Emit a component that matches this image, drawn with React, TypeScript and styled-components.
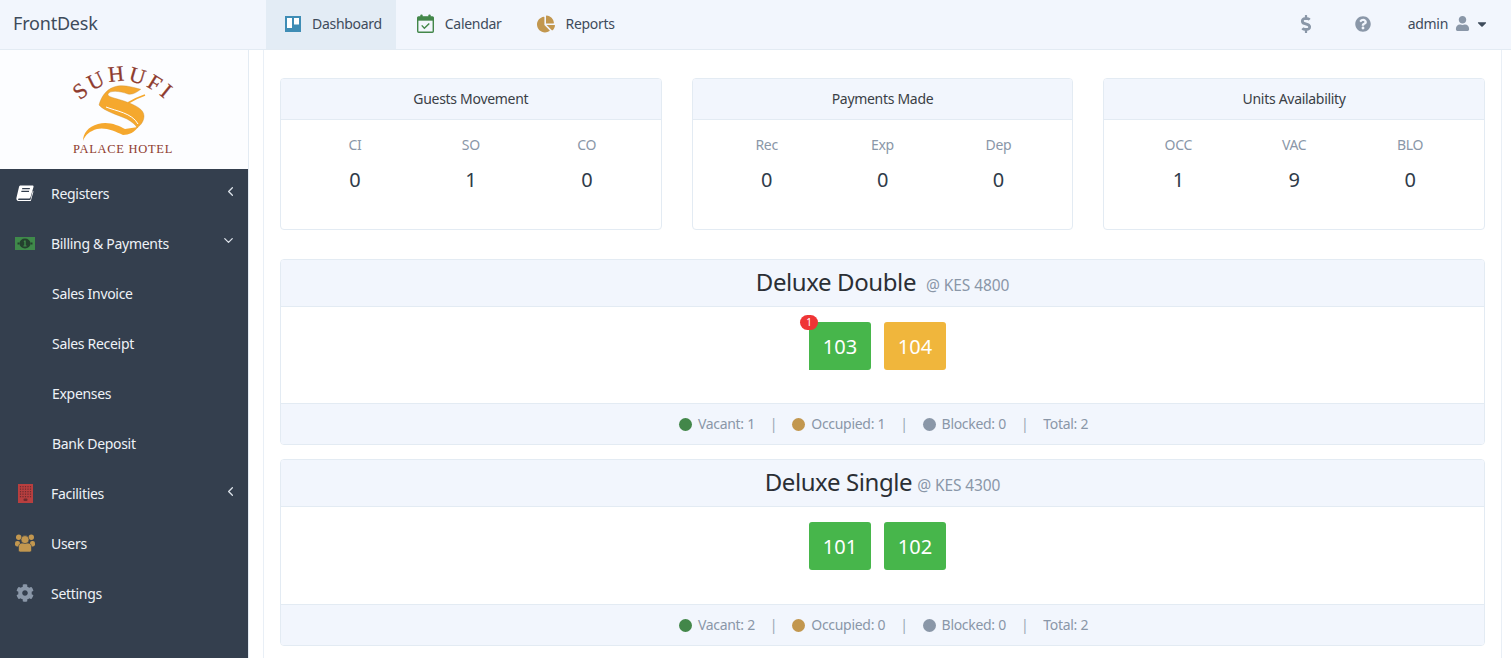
import React from "react";
import styled, { createGlobalStyle } from "styled-components";
import { ChevronDown, ChevronLeft } from "lucide-react";
import {
  FaCaretDown,
  FaChartPie,
  FaCog,
  FaDollarSign,
  FaQuestionCircle,
  FaUser,
} from "react-icons/fa";

const GlobalStyle = createGlobalStyle`
  html, body {
    margin: 0;
    height: 100%;
    overflow: hidden;
    background: #fff;
    font-family: "Noto Sans", "Open Sans", sans-serif;
    font-size: 14px;
    letter-spacing: -0.3px;
    color: #3e4b5b;
  }
  * { box-sizing: border-box; }
`;

const Page = styled.div`
  width: 1511px;
  height: 658px;
  display: flex;
  flex-direction: column;
  overflow: hidden;
`;

const Navbar = styled.header`
  flex: 0 0 50px;
  display: flex;
  align-items: stretch;
  background: #f2f6fd;
  border-bottom: 1px solid #e3ebf3;
`;

const Brand = styled.div`
  width: 266px;
  padding-left: 13px;
  font-size: 18px;
  letter-spacing: -0.2px;
  line-height: 47px;
  color: #3e4b5b;
`;

const NavItem = styled.a<{ $active?: boolean }>`
  display: flex;
  align-items: center;
  gap: 11px;
  padding: 0 14px 2px 21px;
  background: ${({ $active }) => ($active ? "#e3ecf5" : "transparent")};
  color: #3e4b5b;
  font-size: 14px;
`;

const NavRight = styled.div`
  margin-left: auto;
  display: flex;
  align-items: center;
  padding: 0 22px 2px 0;
  color: #8a97a8;
`;

const NavIconButton = styled.span<{ $gap: number }>`
  display: flex;
  margin-right: ${({ $gap }) => $gap}px;
  font-size: 18px;
`;

const UserName = styled.span`
  color: #3e4b5b;
  margin-right: 7px;
`;

const Caret = styled(FaCaretDown)`
  color: #3e4b5b;
  margin-left: 5px;
  font-size: 14px;
`;

const Body = styled.div`
  flex: 1;
  display: flex;
  min-height: 0;
`;

const Sidebar = styled.aside`
  flex: 0 0 249px;
  display: flex;
  flex-direction: column;
  border-right: 1px solid #e3ebf3;
`;

const LogoBox = styled.div`
  flex: 0 0 119px;
  display: flex;
  justify-content: center;
  padding-top: 12px;
  background: #fcfdff;
`;

const Menu = styled.nav`
  flex: 1;
  background: #343f4e;
`;

const MenuRow = styled.a<{ $sub?: boolean }>`
  height: 50px;
  display: flex;
  align-items: center;
  padding-left: ${({ $sub }) => ($sub ? "52px" : "0")};
  padding-right: 10px;
  padding-bottom: 2px;
  color: #eef2f7;
  font-size: 14px;
`;

const MenuIcon = styled.span<{ $color: string }>`
  width: 51px;
  padding-right: 1px;
  display: flex;
  justify-content: center;
  color: ${({ $color }) => $color};
  font-size: 20px;
`;

const MenuChevron = styled.span<{ $down?: boolean }>`
  margin-left: auto;
  margin-right: ${({ $down }) => ($down ? "2px" : "0")};
  margin-top: ${({ $down }) => ($down ? "-6px" : "-4px")};
  display: flex;
  color: #dfe5ec;
`;

const Main = styled.main`
  flex: 1;
  padding: 0 9px 0 14px;
  min-width: 0;
`;

const Content = styled.div`
  height: 100%;
  padding: 28px 16px 0;
  border-left: 1px solid #e9eff6;
  border-right: 1px solid #e9eff6;
  overflow: hidden;
`;

const StatsGrid = styled.section`
  display: grid;
  grid-template-columns: repeat(3, 1fr);
  gap: 30px;
  margin-bottom: 29px;
`;

const Card = styled.div`
  border: 1px solid #e3ebf3;
  border-radius: 4px;
  overflow: hidden;
  background: #fff;
`;

const StatCard = styled(Card)`
  height: 152px;
`;

const StatHeader = styled.div`
  height: 41px;
  line-height: 39px;
  text-align: center;
  background: #f2f6fd;
  border-bottom: 1px solid #e3ebf3;
  color: #3a3f46;
`;

const StatRow = styled.div`
  display: grid;
  grid-template-columns: repeat(3, 1fr);
  padding: 15px 16px 0;
  text-align: center;
`;

const StatLabel = styled.div`
  color: #8a97a8;
  line-height: 20px;
`;

const StatValue = styled.div`
  font-size: 20px;
  line-height: 30px;
  margin-top: 10px;
  color: #2f3b49;
`;

const RoomCard = styled(Card)`
  margin-bottom: 14px;
`;

const RoomHeader = styled.div<{ $gap: number }>`
  height: 47px;
  display: flex;
  justify-content: center;
  align-items: baseline;
  gap: ${({ $gap }) => $gap}px;
  padding-top: 3px;
  background: #f2f6fd;
  border-bottom: 1px solid #e3ebf3;
`;

const RoomTitle = styled.span`
  font-size: 24px;
  letter-spacing: -0.4px;
  line-height: 38px;
  color: #2b2f35;
`;

const RoomRate = styled.span`
  font-size: 15.5px;
  letter-spacing: -0.1px;
  color: #8a97a8;
`;

const RoomBody = styled.div<{ $height: number }>`
  height: ${({ $height }) => $height}px;
  display: flex;
  justify-content: center;
  gap: 13px;
  padding: 15px 10px 0 0;
`;

const Tile = styled.div<{ $color: string; $flagged?: boolean }>`
  position: relative;
  width: 62px;
  height: 48px;
  display: flex;
  align-items: center;
  justify-content: center;
  background: ${({ $color }) => $color};
  border-radius: ${({ $flagged }) => ($flagged ? "0 3px 3px 0" : "3px")};
  color: #fff;
  font-size: 20px;
  letter-spacing: 0;
`;

const Badge = styled.span`
  position: absolute;
  top: -7px;
  left: -9px;
  width: 18px;
  height: 15px;
  border-radius: 8px;
  background: #ef3535;
  color: #fff;
  font-size: 10px;
  line-height: 14px;
  text-align: center;
`;

const RoomFooter = styled.div`
  height: 41px;
  display: flex;
  justify-content: center;
  align-items: center;
  padding: 0 0 2px 2px;
  background: #f2f6fd;
  border-top: 1px solid #e3ebf3;
  color: #8a97a8;
`;

const Dot = styled.span<{ $color: string }>`
  width: 13px;
  height: 13px;
  margin: 2px 6px 0 0;
  border-radius: 50%;
  background: ${({ $color }) => $color};
`;

const Divider = styled.span`
  margin: 0 15px;
  color: #9aa6b4;
`;

const DashboardGlyph = styled.svg`
  margin-left: -2px;
`;

const TrelloIcon = () => (
  <DashboardGlyph width="16" height="16" viewBox="0 0 16 16">
    <rect width="16" height="16" fill="#3f8db5" />
    <rect x="2" y="2" width="5" height="10" fill="#fff" />
    <rect x="9" y="2" width="5" height="6.5" fill="#fff" />
  </DashboardGlyph>
);

const CalendarIcon = () => (
  <svg width="17" height="19" viewBox="0 0 18 20">
    <rect x="0.75" y="3" width="16.5" height="16.25" rx="1" fill="none" stroke="#43874a" strokeWidth="1.5" />
    <rect x="0.75" y="3" width="16.5" height="4" fill="#43874a" />
    <rect x="3.5" y="0.5" width="2.5" height="4" rx="1" fill="#43874a" />
    <rect x="12" y="0.5" width="2.5" height="4" rx="1" fill="#43874a" />
    <path d="M5 12l2.800 3 5.200-5" fill="none" stroke="#43874a" strokeWidth="1.5" />
  </svg>
);

const BookIcon = () => (
  <svg width="18" height="16" viewBox="0 0 18 16" fill="currentColor">
    <path d="M4.500 0.500h12c.8 0 1.200.6 1 1.400l-3 10.300c-.3.900-.9 1.400-1.800 1.400H3c-.7 0-1 .4-.9.900.1.400.4.600.9.600h10.500c.5 0 .8-.2 1-.7l2.300-8.500.7.600-2.500 8.700c-.2.800-.9 1.300-1.700 1.300H2.600C1.100 15.500.200 14.400.400 13L3 1.900C3.200 1.100 3.800.5 4.500.500zM6.300 3l-.3 1.200h7.700l.3-1.200H6.300zM5.500 5.700l-.3 1.200h7.700l.3-1.200H5.500z" />
  </svg>
);

const MoneyIcon = () => (
  <svg width="20" height="13" viewBox="0 0 20 13">
    <rect width="20" height="13" fill="currentColor" />
    <ellipse cx="10" cy="6.500" rx="5.500" ry="5" fill="#24402e" />
    <rect x="2.500" y="5.500" width="2" height="2" fill="#24402e" />
    <rect x="15.500" y="5.500" width="2" height="2" fill="#24402e" />
    <path d="M9.200 3.500h1.500v5h.9v1H8.400v-1h.9V4.700l-.7.300z" fill="currentColor" />
  </svg>
);

const windowRows = [2, 4.5, 7, 9.5, 12];
const windowCols = [2.5, 5, 7.5, 10, 12.5];

const BuildingIcon = () => (
  <svg width="15" height="19" viewBox="0 0 15 19">
    <rect width="15" height="19" fill="currentColor" />
    {windowRows.map((y) =>
      windowCols.map((x) => <rect key={`${x}-${y}`} x={x - 0.6} y={y} width="1.2" height="1.3" fill="#6f2b30" />)
    )}
    <rect x="5.5" y="14.500" width="4" height="2.500" rx="1" fill="#6f2b30" />
  </svg>
);

const UsersIcon = () => (
  <svg width="20" height="18" viewBox="0 0 20 18" fill="currentColor">
    <circle cx="3.700" cy="3.300" r="2.700" />
    <circle cx="16.300" cy="3.300" r="2.700" />
    <rect x="0" y="7" width="5" height="5.500" rx="2.200" />
    <rect x="15" y="7" width="5" height="5.500" rx="2.200" />
    <path d="M5.200 18c-1 0-1.700-.7-1.700-1.700v-3.500c0-2.300 1.700-3.800 3.800-3.800h5.400c2.100 0 3.800 1.500 3.800 3.800v3.500c0 1-.7 1.700-1.700 1.700z" stroke="#343f4e" strokeWidth=".6" />
    <circle cx="10" cy="5.600" r="4" stroke="#343f4e" strokeWidth=".6" />
  </svg>
);

const Logo = () => (
  <svg width="112" height="96" viewBox="68 62 112 96">
    <defs>
      <path id="logo-arc" d="M75 106 Q122 56 172 106" />
    </defs>
    <text
      fontFamily="Liberation Serif, serif"
      fontSize="22"
      fill="#8e3b2e"
      stroke="#8e3b2e"
      strokeWidth=".25"
      letterSpacing="3"
    >
      <textPath href="#logo-arc" startOffset="50%" textAnchor="middle">
        SUHUFI
      </textPath>
    </text>
    <path
      d="M83 141 C83 133 88 127 98 124 C108 121 118 125 125 129 L138 127 C135 132 129 135 123 135 C115 131 105 127 97 129 C90 131 85 135 83 141Z"
      fill="#f5a82e"
    />
    <path
      d="M140.700 89.300 C132 87 122 84 114 87 C105 90 101 98 99 105 C104 111 118 115 127 119 C132 122 136 125 137 128 C141 125 144 121 144 116 C144 109 135 105 124 101 C115 98 107 97 108 94 C110 90 120 91 128 94 C133 95 137 92 140.700 89.300Z"
      fill="#f5a82e"
      stroke="#c98f35"
      strokeWidth=".4"
    />
    <path d="M106 107 C116 111 132 113 138 124" stroke="#fff" strokeWidth="1" fill="none" />
    <path d="M128 103 C133 100 139 97 145 95" stroke="#f5a82e" strokeWidth="1.800" fill="none" />
    <text
      x="122.500"
      y="153"
      fontFamily="Liberation Serif, serif"
      fontSize="12.5"
      fill="#8e3b2e"
      textAnchor="middle"
      textLength="99"
      lengthAdjust="spacing"
    >
      PALACE HOTEL
    </text>
  </svg>
);

const stats = [
  { title: "Guests Movement", items: [["CI", 0], ["SO", 1], ["CO", 0]] },
  { title: "Payments Made", items: [["Rec", 0], ["Exp", 0], ["Dep", 0]] },
  { title: "Units Availability", items: [["OCC", 1], ["VAC", 9], ["BLO", 0]] },
];

const GREEN = "#47b64b";
const AMBER = "#f0b63c";

const rooms = [
  {
    name: "Deluxe Double",
    rate: "@ KES 4800",
    headerGap: 10,
    bodyHeight: 96,
    tiles: [
      { no: 103, color: GREEN, badge: 1 },
      { no: 104, color: AMBER },
    ],
    vacant: 1,
    occupied: 1,
  },
  {
    name: "Deluxe Single",
    rate: "@ KES 4300",
    headerGap: 5,
    bodyHeight: 97,
    tiles: [
      { no: 101, color: GREEN },
      { no: 102, color: GREEN },
    ],
    vacant: 2,
    occupied: 0,
  },
];

export default function App() {
  return (
    <Page>
      <GlobalStyle />
      <Navbar>
        <Brand>FrontDesk</Brand>
        <NavItem $active>
          <TrelloIcon />
          Dashboard
        </NavItem>
        <NavItem>
          <CalendarIcon />
          Calendar
        </NavItem>
        <NavItem>
          <FaChartPie size={18} color="#c2974f" />
          Reports
        </NavItem>
        <NavRight>
          <NavIconButton $gap={40}>
            <FaDollarSign />
          </NavIconButton>
          <NavIconButton $gap={37}>
            <FaQuestionCircle size={16} />
          </NavIconButton>
          <UserName>admin</UserName>
          <FaUser size={15} />
          <Caret />
        </NavRight>
      </Navbar>
      <Body>
        <Sidebar>
          <LogoBox>
            <Logo />
          </LogoBox>
          <Menu>
            <MenuRow>
              <MenuIcon $color="#fff"><BookIcon /></MenuIcon>
              Registers
              <MenuChevron><ChevronLeft size={15} /></MenuChevron>
            </MenuRow>
            <MenuRow>
              <MenuIcon $color="#3f8a4a"><MoneyIcon /></MenuIcon>
              Billing &amp; Payments
              <MenuChevron $down><ChevronDown size={15} /></MenuChevron>
            </MenuRow>
            <MenuRow $sub>Sales Invoice</MenuRow>
            <MenuRow $sub>Sales Receipt</MenuRow>
            <MenuRow $sub>Expenses</MenuRow>
            <MenuRow $sub>Bank Deposit</MenuRow>
            <MenuRow>
              <MenuIcon $color="#b83f3f"><BuildingIcon /></MenuIcon>
              Facilities
              <MenuChevron><ChevronLeft size={15} /></MenuChevron>
            </MenuRow>
            <MenuRow>
              <MenuIcon $color="#c2974f"><UsersIcon /></MenuIcon>
              Users
            </MenuRow>
            <MenuRow>
              <MenuIcon $color="#8a97a8"><FaCog size={18} /></MenuIcon>
              Settings
            </MenuRow>
          </Menu>
        </Sidebar>
        <Main>
          <Content>
            <StatsGrid>
              {stats.map((s) => (
                <StatCard key={s.title}>
                  <StatHeader>{s.title}</StatHeader>
                  <StatRow>
                    {s.items.map(([label, value]) => (
                      <div key={label}>
                        <StatLabel>{label}</StatLabel>
                        <StatValue>{value}</StatValue>
                      </div>
                    ))}
                  </StatRow>
                </StatCard>
              ))}
            </StatsGrid>
            {rooms.map((r) => (
              <RoomCard key={r.name}>
                <RoomHeader $gap={r.headerGap}>
                  <RoomTitle>{r.name}</RoomTitle>
                  <RoomRate>{r.rate}</RoomRate>
                </RoomHeader>
                <RoomBody $height={r.bodyHeight}>
                  {r.tiles.map((t) => (
                    <Tile key={t.no} $color={t.color} $flagged={!!t.badge}>
                      {t.badge && <Badge>{t.badge}</Badge>}
                      {t.no}
                    </Tile>
                  ))}
                </RoomBody>
                <RoomFooter>
                  <Dot $color="#43874a" />
                  Vacant: {r.vacant}
                  <Divider>|</Divider>
                  <Dot $color="#c2974f" />
                  Occupied: {r.occupied}
                  <Divider>|</Divider>
                  <Dot $color="#8a97a8" />
                  Blocked: 0
                  <Divider>|</Divider>
                  Total: 2
                </RoomFooter>
              </RoomCard>
            ))}
          </Content>
        </Main>
      </Body>
    </Page>
  );
}
